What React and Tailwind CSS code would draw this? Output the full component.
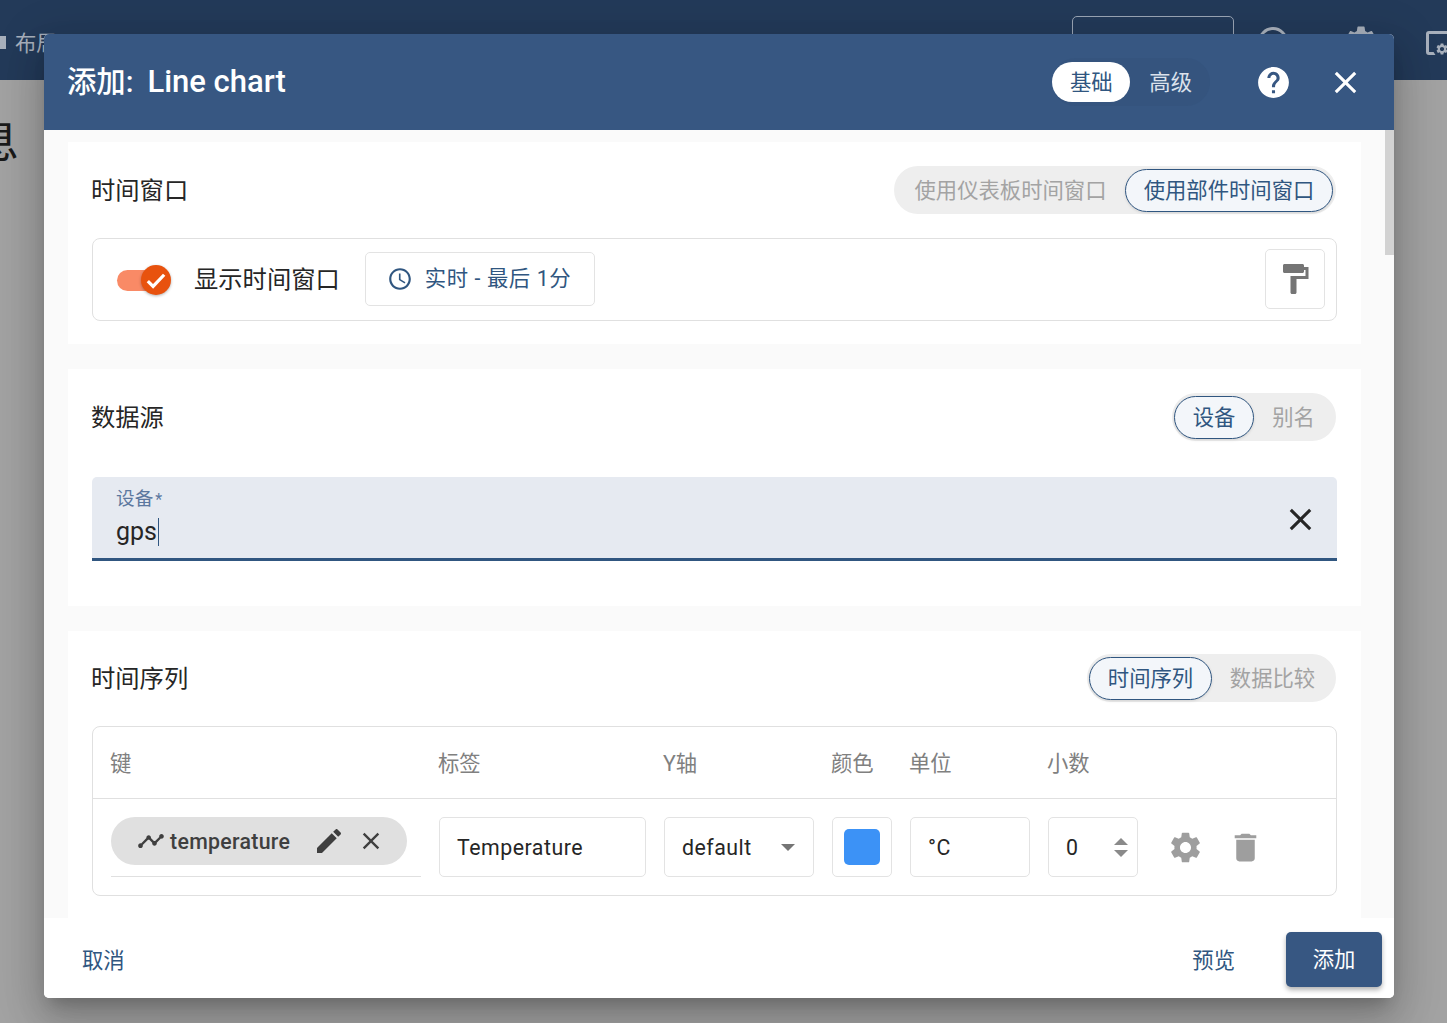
import React from "react";

const FONT = { fontFamily: '"Roboto", "Noto Sans CJK SC", sans-serif' };

const ICONS = {
  schedule:
    "M11.99 2C6.47 2 2 6.48 2 12s4.47 10 9.99 10C17.52 22 22 17.52 22 12S17.52 2 11.99 2zM12 20c-4.42 0-8-3.58-8-8s3.58-8 8-8 8 3.58 8 8-3.58 8-8 8zm.5-13H11v6l5.25 3.15.75-1.23-4.5-2.67z",
  paint:
    "M18 4V3c0-.55-.45-1-1-1H5c-.55 0-1 .45-1 1v4c0 .55.45 1 1 1h12c.55 0 1-.45 1-1V6h1v4H9v11c0 .55.45 1 1 1h2c.55 0 1-.45 1-1v-9h8V4h-3z",
  help:
    "M12 2C6.48 2 2 6.48 2 12s4.48 10 10 10 10-4.48 10-10S17.52 2 12 2zm1 17h-2v-2h2v2zm2.07-7.75l-.9.92C13.45 12.9 13 13.5 13 15h-2v-.5c0-1.1.45-2.1 1.17-2.83l1.24-1.26c.37-.36.59-.86.59-1.41 0-1.1-.9-2-2-2s-2 .9-2 2H8c0-2.21 1.79-4 4-4s4 1.79 4 4c0 .88-.36 1.68-.93 2.25z",
  close:
    "M19 6.41L17.59 5 12 10.59 6.41 5 5 6.41 10.59 12 5 17.59 6.41 19 12 13.41 17.59 19 19 17.59 13.41 12z",
  edit:
    "M3 17.25V21h3.75L17.81 9.94l-3.75-3.75L3 17.25zM20.71 7.04c.39-.39.39-1.02 0-1.41l-2.34-2.34c-.39-.39-1.02-.39-1.41 0l-1.83 1.83 3.75 3.75 1.83-1.83z",
  settings:
    "M19.14 12.94c.04-.3.06-.61.06-.94 0-.32-.02-.64-.07-.94l2.03-1.58c.18-.14.23-.41.12-.61l-1.92-3.32c-.12-.22-.37-.29-.59-.22l-2.39.96c-.5-.38-1.03-.7-1.62-.94l-.36-2.54c-.04-.24-.24-.41-.48-.41h-3.84c-.24 0-.43.17-.47.41l-.36 2.54c-.59.24-1.13.57-1.62.94l-2.39-.96c-.22-.08-.47 0-.59.22L2.74 8.87c-.12.21-.08.47.12.61l2.03 1.58c-.05.3-.09.63-.09.94s.02.64.07.94l-2.03 1.58c-.18.14-.23.41-.12.61l1.92 3.32c.12.22.37.29.59.22l2.39-.96c.5.38 1.03.7 1.62.94l.36 2.54c.05.24.24.41.48.41h3.84c.24 0 .44-.17.47-.41l.36-2.54c.59-.24 1.13-.56 1.62-.94l2.39.96c.22.08.47 0 .59-.22l1.92-3.32c.12-.22.07-.47-.12-.61l-2.01-1.58zM12 15.6c-1.98 0-3.6-1.62-3.6-3.6s1.62-3.6 3.6-3.6 3.6 1.62 3.6 3.6-1.62 3.6-3.6 3.6z",
  trash: "M6 19c0 1.1.9 2 2 2h8c1.1 0 2-.9 2-2V7H6v12zM19 4h-3.5l-1-1h-5l-1 1H5v2h14V4z",
  timeline:
    "M23 8c0 1.1-.9 2-2 2-.18 0-.35-.02-.51-.07l-3.56 3.55c.05.16.07.34.07.52 0 1.1-.9 2-2 2s-2-.9-2-2c0-.18.02-.36.07-.52l-2.55-2.55c-.16.05-.34.07-.52.07s-.36-.02-.52-.07l-4.55 4.56c.05.16.07.33.07.51 0 1.1-.9 2-2 2s-2-.9-2-2 .9-2 2-2c.18 0 .35.02.51.07l4.56-4.55C8.02 9.36 8 9.18 8 9c0-1.1.9-2 2-2s2 .9 2 2c0 .18-.02.36-.07.52l2.55 2.55c.16-.05.34-.07.52-.07s.36.02.52.07l3.55-3.56C19.02 8.35 19 8.18 19 8c0-1.1.9-2 2-2s2 .9 2 2z",
};

const Icon = ({ name, className }) => (
  <svg viewBox="0 0 24 24" fill="currentColor" className={`shrink-0 ${className}`}>
    <path d={ICONS[name]} />
  </svg>
);

const Segmented = ({ options, active, widths }) => (
  <div className="mr-[1px] flex h-[48px] items-center rounded-full bg-[#eeeeee] pl-[2px] pr-[3px] text-[21.33px]">
    {options.map((opt, i) =>
      i === active ? (
        <div
          key={opt}
          className={`flex h-[43px] items-center justify-center rounded-full border border-[#305680] bg-[#f3f6fa] pt-[2px] text-[#305680] shadow-[0_1px_3px_rgba(0,0,0,0.12)] ${widths[i]}`}
        >
          {opt}
        </div>
      ) : (
        <div key={opt} className={`flex items-center justify-center pt-[2px] text-[#a3a3a3] ${widths[i]}`}>
          {opt}
        </div>
      )
    )}
  </div>
);

const Cell = ({ className, children }) => (
  <div className={`flex h-[60px] items-center rounded-[5px] border border-[#e3e3e3] text-[21.33px] tracking-[0.5px] text-[#262626] ${className}`}>
    {children}
  </div>
);

const Title = ({ children }) => <h2 className="-ml-[1px] pt-[2px] text-[24.3px] font-normal">{children}</h2>;

const App = () => {
  return (
    <div className="relative h-[1023px] w-full overflow-hidden bg-[#a2a2a2]" style={FONT}>
      {/* page behind the dialog */}
      <div className="flex h-[80px] items-start bg-[#233a59]">
        <div className="mt-[36px] h-[13px] w-[6px] shrink-0 bg-[#a8b0bc]"></div>
        <div className="ml-[9px] mt-[28px] w-[43px] shrink-0 whitespace-nowrap text-[21.33px] text-[#a8b0bc]">布局</div>
        <div className="ml-[1014px] mt-[16px] h-[60px] w-[162px] shrink-0 rounded-[5px] border border-[#9aa5b5]"></div>
        <div className="ml-[24px] mt-[27px] h-[30px] w-[30px] shrink-0 rounded-full border-[3px] border-[#a8b0bc]"></div>
        <Icon name="settings" className="ml-[55px] mt-[23px] h-[36px] w-[36px] text-[#a8b0bc]" />
        <div className="relative ml-[47px] mt-[31px] h-[24px] w-[40px] shrink-0 rounded-[3px] border-[3px] border-[#a8b0bc]">
          <div className="absolute left-[4px] top-[6px] h-[18px] w-[18px] rounded-full bg-[#233a59]"></div>
          <Icon name="settings" className="absolute left-[6px] top-[8px] h-[14px] w-[14px] text-[#a8b0bc]" />
        </div>
      </div>
      <div className="-ml-[26px] mt-[31px] text-[45px] leading-[63px] text-[#1a1a1a]">息</div>

      {/* dialog */}
      <div className="absolute left-[44px] top-[34px] flex h-[964px] w-[1350px] flex-col overflow-hidden rounded-[5px] bg-white shadow-[0_11px_15px_-7px_rgba(0,0,0,0.2),0_24px_38px_3px_rgba(0,0,0,0.14),0_9px_46px_8px_rgba(0,0,0,0.12)]">
        <div className="flex h-[96px] shrink-0 items-center bg-[#375782] pl-[23px] text-white">
          <div className="flex items-baseline pt-[1px] font-medium">
            <span className="text-[29.33px]">添加:</span>
            <span className="ml-[14px] text-[31px]">Line chart</span>
          </div>
          <div className="ml-auto flex h-[48px] items-center rounded-full bg-[#35547e] pr-[18px] text-[21.33px]">
            <div className="flex h-[40px] w-[78px] items-center justify-center rounded-full bg-white pt-[2px] text-[#305680]">基础</div>
            <div className="ml-[19px] pt-[2px] text-[#dbe2ec]">高级</div>
          </div>
          <Icon name="help" className="ml-[45px] h-[37px] w-[37px]" />
          <Icon name="close" className="ml-[35px] mr-[30px] h-[37px] w-[37px]" />
        </div>

        <div className="relative flex-1 overflow-hidden bg-[#fafafa] pl-[24px] pt-[12px]">
          <div className="flex w-[1293px] flex-col gap-[25px] text-[#262626]">
            <section className="h-[202px] bg-white px-[24px] pt-[24px]">
              <div className="flex items-center justify-between">
                <Title>时间窗口</Title>
                <Segmented options={["使用仪表板时间窗口", "使用部件时间窗口"]} active={1} widths={["w-[229px]", "w-[208px]"]} />
              </div>
              <div className="mt-[24px] flex h-[83px] items-center rounded-[8px] border border-[#e0e0e0] pl-[24px] pr-[11px]">
                <div className="relative h-[30px] w-[54px] shrink-0">
                  <div className="absolute left-0 top-[5px] h-[21px] w-[44px] rounded-full bg-[#f98a66]"></div>
                  <div className="absolute right-0 top-0 flex h-[30px] w-[30px] items-center justify-center rounded-full bg-[#e8520e] shadow-[0_1px_3px_rgba(0,0,0,0.3)]">
                    <svg viewBox="0 0 24 24" className="h-[28px] w-[28px]" fill="none" stroke="white" strokeWidth="2.8">
                      <path d="M5 13l4.5 4.5L19 7.5" />
                    </svg>
                  </div>
                </div>
                <div className="ml-[23px] pt-[2px] text-[24.3px]">显示时间窗口</div>
                <div className="ml-[25px] mb-[2px] flex h-[54px] w-[230px] items-center rounded-[5px] border border-[#e3e3e3] pl-[21px] text-[21.33px] tracking-[0.6px] text-[#305680]">
                  <Icon name="schedule" className="h-[26px] w-[26px]" />
                  <span className="ml-[12px]">实时 - 最后 1分</span>
                </div>
                <div className="ml-auto mb-[2px] flex h-[60px] w-[60px] items-center justify-center rounded-[5px] border border-[#e3e3e3]">
                  <Icon name="paint" className="h-[36px] w-[36px] text-[#757575]" />
                </div>
              </div>
            </section>

            <section className="h-[237px] bg-white px-[24px] pt-[24px]">
              <div className="flex items-center justify-between">
                <Title>数据源</Title>
                <Segmented options={["设备", "别名"]} active={0} widths={["w-[80px]", "w-[79px]"]} />
              </div>
              <div className="relative mt-[36px] h-[84px] rounded-t-[5px] border-b-[3px] border-[#305680] bg-[#e6eaf1] pl-[24px]">
                <div className="pt-[11px] text-[18.67px] leading-[22px] text-[#5c789f]">设备<span className="ml-[2px] text-[16px]">*</span></div>
                <div className="mt-[4px] flex h-[34px] items-center text-[25px] text-[#262626]">
                  gps
                  <span className="ml-[1px] h-[28px] w-px bg-[#305680]"></span>
                </div>
                <Icon name="close" className="absolute right-[18px] top-[24px] h-[37px] w-[37px] text-[#262626]" />
              </div>
            </section>

            <section className="bg-white px-[24px] pt-[23px] pb-[30px]">
              <div className="flex items-center justify-between">
                <Title>时间序列</Title>
                <Segmented options={["时间序列", "数据比较"]} active={0} widths={["w-[123px]", "w-[121px]"]} />
              </div>
              <div className="mt-[24px] rounded-[8px] border border-[#e0e0e0]">
                <div className="flex h-[72px] items-center gap-[18px] border-b border-[#e0e0e0] px-[17px] pt-[2px] text-[21.33px] text-[#808080]">
                  <div className="w-[310px]">键</div>
                  <div className="w-[207px]">标签</div>
                  <div className="w-[150px]">Y轴</div>
                  <div className="w-[60px]">颜色</div>
                  <div className="w-[120px]">单位</div>
                  <div className="w-[90px]">小数</div>
                </div>
                <div className="flex h-[96px] items-start gap-[18px] px-[18px] pt-[18px]">
                  <div className="h-[60px] w-[310px] shrink-0 border-b border-[#e0e0e0]">
                    <div className="flex h-[48px] w-[296px] items-center rounded-full bg-[#e0e0e0] pl-[26px] text-[#3f3f3f]">
                      <Icon name="timeline" className="h-[28px] w-[28px]" />
                      <span className="ml-[5px] pt-[1px] text-[21.33px] font-medium tracking-[0.3px]">temperature</span>
                      <Icon name="edit" className="ml-[23px] h-[32px] w-[32px]" />
                      <Icon name="close" className="ml-[12px] h-[28px] w-[28px]" />
                    </div>
                  </div>
                  <Cell className="w-[207px] pl-[17px]"><span className="pt-[2px]">Temperature</span></Cell>
                  <Cell className="w-[150px] pl-[17px] pr-[18px]">
                    <span className="pt-[2px]">default</span>
                    <span className="ml-auto h-0 w-0 border-x-[7px] border-t-[7px] border-x-transparent border-t-[#757575]"></span>
                  </Cell>
                  <Cell className="w-[60px] justify-center">
                    <div className="h-[36px] w-[36px] rounded-[5px] bg-[#3c92f6]"></div>
                  </Cell>
                  <Cell className="w-[120px] pl-[17px]"><span className="pt-[2px]">°C</span></Cell>
                  <Cell className="w-[90px] pl-[17px] pr-[9px]">
                    <span className="pt-[2px]">0</span>
                    <div className="ml-auto flex flex-col gap-[5px]">
                      <span className="h-0 w-0 border-x-[7px] border-b-[7px] border-x-transparent border-b-[#8a8a8a]"></span>
                      <span className="h-0 w-0 border-x-[7px] border-t-[7px] border-x-transparent border-t-[#8a8a8a]"></span>
                    </div>
                  </Cell>
                  <div className="flex h-[60px] items-center text-[#9e9e9e]">
                    <Icon name="settings" className="ml-[11px] h-[37px] w-[37px]" />
                    <Icon name="trash" className="ml-[23px] h-[37px] w-[37px]" />
                  </div>
                </div>
              </div>
            </section>
          </div>
          <div className="absolute right-0 top-0 h-[125px] w-[9px] bg-[#d2d2d2]"></div>
        </div>

        <div className="flex h-[80px] shrink-0 items-center bg-white pl-[38px] pr-[12px] text-[21.33px] text-[#305680]">
          <div className="mt-[6px]">取消</div>
          <div className="ml-auto mt-[6px]">预览</div>
          <div className="ml-[51px] mt-[2px] flex h-[55px] w-[96px] items-center justify-center rounded-[5px] bg-[#375782] pt-[2px] text-white shadow-[0_3px_5px_rgba(0,0,0,0.3)]">添加</div>
        </div>
      </div>
    </div>
  );
};

export default App;
